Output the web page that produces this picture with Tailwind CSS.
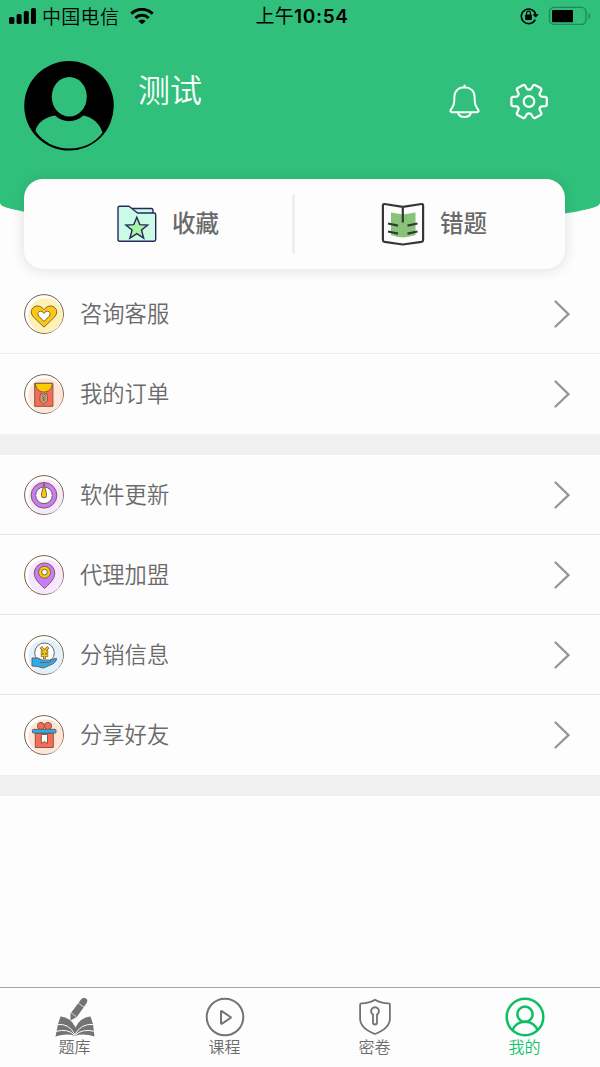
<!DOCTYPE html>
<html lang="zh-CN">
<head>
<meta charset="utf-8">
<title>我的</title>
<script src="https://cdn.jsdelivr.net/npm/@tailwindcss/browser@4"></script>
</head>
<body class="w-[600px] h-[1067px] flex flex-col overflow-hidden bg-[#fdfdfd] text-[#6a6a6a] font-['Noto_Sans_CJK_SC',sans-serif]">

<header class="h-[225px] shrink-0 bg-[#31c07b] rounded-b-[50%_22px]">
  <!-- Status bar -->
  <div class="h-8 flex items-center justify-between pl-[9px] pr-[9px] text-black">
    <div class="w-[240px] flex items-center">
      <svg class="w-[27px] h-4" viewBox="0 0 27 16"><rect x="0" y="9" width="5.4" height="7" rx="1.6"/><rect x="7.6" y="6" width="5" height="10" rx="1.6"/><rect x="14.8" y="3" width="5" height="13" rx="1.6"/><rect x="22" y="0" width="5" height="16" rx="1.6"/></svg>
      <span class="ml-[6px] w-[78px] text-[19px] leading-8 font-[350] whitespace-nowrap tracking-[0.3px]">中国电信</span>
      <svg class="ml-[10px] w-[24px] h-4" viewBox="0 0 24 16" fill="none" stroke="#000" stroke-width="3"><path d="M1.3 5.7C7.5-.1 16.5-.1 22.7 5.7"/><path d="M5.3 10C9.1 6.4 14.9 6.4 18.7 10"/><path d="M8.2 13Q12 9.9 15.8 13L12 16.2z" fill="#000" stroke="none"/></svg>
    </div>
    <span class="pl-[4px] text-[19px] leading-8 font-normal whitespace-nowrap tracking-[0.3px]">上午<span class="font-['Inter'] font-semibold text-[19px] tracking-[0.65px]">10:54</span></span>
    <div class="w-[240px] flex items-center justify-end">
      <svg class="w-[19px] h-[18px]" viewBox="0 0 19 18" fill="none" stroke="#000" stroke-width="1.6"><path d="M15.2 12.6A7.3 7.3 0 1 1 15.7 7.5"/><path d="M12.6 7.2h6L15.7 10.8z" fill="#000" stroke="none"/><rect x="5.2" y="7.5" width="6.6" height="5.5" rx=".8" fill="#000" stroke="none"/><path d="M6.6 8V6a1.9 1.9 0 0 1 3.8 0v2" stroke-width="1.2"/></svg>
      <svg class="ml-[9px] w-[43px] h-[20px]" viewBox="0 0 43 20"><rect x="1.500" y="1.400" width="36.500" height="17" rx="4.500" fill="none" stroke="#22885a" stroke-width="1.400"/><rect x="4" y="3.900" width="21" height="12.300" rx="1"/><path d="M40.500 6.500q3.500 3.500 0 7z" fill="#22885a"/></svg>
    </div>
  </div>
  <!-- Profile -->
  <div class="flex items-start pl-6 pt-[29px]">
    <svg class="w-[90px] h-[90px]" viewBox="0 0 90 90"><circle cx="45" cy="44.800" r="44.800"/><ellipse cx="45.3" cy="35.8" rx="17.5" ry="19.8" fill="#31c07b"/><path d="M11.500 70C13 62 21 56 31 54.500 39 62 51 62 59.500 54.500 69 56.500 76 63 78.500 71.500C71 82 59 87.500 45 87.500S19 81 11.500 70z" fill="#31c07b"/></svg>
    <h1 class="ml-6 mt-[4px] w-[311px] text-[32px] leading-[46px] font-[350] text-white">测试</h1>
    <svg class="mt-[23px] w-[31px] h-[35px]" viewBox="0 0 32 35" fill="none" stroke="#fff" stroke-width="2" stroke-linejoin="round" stroke-linecap="round"><path d="M16 1v2M2.500 28.500C.500 28 1.800 25.500 3 24.300 5 22 5.500 20 5.500 16.500V13C5.500 6.500 10 2.800 16 2.800S26.500 6.500 26.500 13v3.500C26.500 20 27 22 29 24.300c1.200 1.200 2.500 3.700.5 4.200z"/><path d="M9.500 29.500C11 34.800 21 34.800 22.500 29.500"/></svg>
    <svg class="ml-[30px] mt-[22px] w-[38px] h-[37px]" viewBox="0 0 38 37" fill="none" stroke="#fff" stroke-width="2.200" stroke-linejoin="round"><path d="M12.800 2.200Q14 1.400 15 2.500L17 6Q19 7.300 21 6L23.200 2.500Q24.200 1.400 25.500 2.200L30.500 5Q31.800 5.900 31.200 7.200L29.500 10.800Q29.600 13.200 31.800 13.600L35 13.900Q36.800 14.200 36.800 15.800V21.200Q36.800 22.800 35 23.100L31.800 23.400Q29.600 23.800 29.500 26.200L31.200 29.800Q31.800 31.100 30.500 32L25.500 34.800Q24.200 35.600 23.200 34.500L21 31Q19 29.700 17 31L15 34.500Q14 35.600 12.800 34.800L7.700 32Q6.400 31.100 7 29.800L8.700 26.200Q8.600 23.800 6.400 23.400L3.200 23.100Q1.400 22.800 1.400 21.200V15.800Q1.400 14.200 3.200 13.900L6.400 13.600Q8.600 13.200 8.700 10.800L7 7.200Q6.400 5.900 7.700 5z"/><circle cx="19" cy="18.500" r="5.300"/></svg>
  </div>
</header>

<!-- Shortcuts -->
<section class="relative z-10 -mt-[46.500px] ml-6 w-[541px] h-[90px] shrink-0 flex items-center rounded-[19px] bg-[#fdfdfd] shadow-[0_1px_14px_rgba(0,0,0,0.13)]">
  <a class="w-[268px] h-full flex items-center pl-[93px]">
    <svg class="w-[40px] h-[38px]" viewBox="0 0 40 38" stroke="#28285e" stroke-width="1.400" stroke-linejoin="round"><path d="M14 6V3.500H34q2 0 2 2V9H21z" fill="#cafbe7"/><path d="M1 3Q1 1.300 2.700 1.300H12L20.500 8H37q1.700 0 1.700 1.700V34.500q0 1.700-1.700 1.700H2.700Q1 36.200 1 34.500z" fill="#cafbe7"/><path d="M19.800 12.300l3 7.300 7.900.4-6.200 5 2.200 8.200-6.900-4.500-6.900 4.500 2.200-8.200-6.200-5 7.900-.4z" fill="#a8f5a4" stroke-linejoin="miter"/></svg>
    <span class="ml-[15px] pb-[3px] text-[23.500px] leading-9 font-medium">收藏</span>
  </a>
  <div class="w-[3px] h-[60px] bg-[#efefef]"></div>
  <a class="flex-1 h-full flex items-center pl-[86px]">
    <svg class="w-[44px] h-[44px]" viewBox="0 0 44 44" fill="none" stroke="#343638" stroke-width="2.200" stroke-linejoin="round"><path d="M10 10.500L21.800 12.500 34.500 10.500V33Q27 35 21.800 35.500 16 35 10 33z" fill="#87c477" stroke="none"/><path d="M3.500 2Q1.900 1.900 1.900 3.500V38Q1.900 39.600 3.500 39.900L21.800 42.500 40.500 39.900Q42.100 39.600 42.100 38V3.500Q42.100 1.900 40.500 2L21.800 4.900zM21.800 5V20.500"/><path d="M7 21.500L17 23.600M7 29.500L17 31.600M36.500 21.500L26.500 23.600M36.500 29.500L26.500 31.600"/></svg>
    <span class="ml-[15px] pb-[3px] text-[23.500px] leading-9 font-medium">错题</span>
  </a>
</section>

<main class="flex-1 pt-[5.500px] text-[22.300px] font-[350]">
  <section>
    <a class="h-20 flex items-center pl-6 pr-[30px] border-b border-[#eeeeee]">
      <svg class="w-[40px] h-[40px]" viewBox="0 0 40 40" stroke="#766047" stroke-width="1" stroke-linejoin="round"><circle cx="20" cy="20" r="19.400" fill="#fff"/><circle cx="21.500" cy="21.500" r="17.300" fill="#fff0b8" stroke="none"/><path d="M20 33.200L9.500 23C6.500 19.500 6.600 15.500 9.800 13.200 13.500 10.800 17.500 12.300 20 15.700 22.500 12.300 26.500 10.800 30.200 13.200 33.400 15.500 33.500 19.500 30.500 23z" fill="#fcc90b"/><path d="M20 27.500L15 22.300C13.500 20.500 13.600 18.500 15.100 17.600 17 16.600 19 17.500 20 19.400 21 17.500 23 16.600 24.900 17.600 26.400 18.500 26.500 20.500 25 22.300z" fill="#fff"/></svg>
      <span class="ml-4 pb-[2px] flex-1">咨询客服</span>
      <svg class="w-4 h-7" viewBox="0 0 16 28" fill="none" stroke="#969696" stroke-width="2.300" stroke-linecap="round"><path d="M1.500 1.500L14.500 14.200 1.500 26.500"/></svg>
    </a>
    <a class="h-20 flex items-center pl-6 pr-[30px]">
      <svg class="w-[40px] h-[40px]" viewBox="0 0 40 40" stroke="#766047" stroke-width="1" stroke-linejoin="round"><circle cx="20" cy="20" r="19.400" fill="#fff"/><circle cx="21.500" cy="21.500" r="17.300" fill="#ffe5d8" stroke="none"/><rect x="10.700" y="9.300" width="18.200" height="23" fill="#fc6a55"/><path d="M11.400 9.300H28.300C28.300 14.500 24.500 18 19.800 18S11.400 14.500 11.400 9.300z" fill="#fccb00"/><path d="M17 19l2.700 2 2.700-2 1 3v5l-3.700 3-3.700-3v-5z" fill="#d9aa89"/><path d="M17.500 21l2.200 3 2.200-3M17.500 24h4.400M17.500 26h4.400M19.700 24v4" fill="none" stroke-width=".8"/></svg>
      <span class="ml-4 pb-[2px] flex-1">我的订单</span>
      <svg class="w-4 h-7" viewBox="0 0 16 28" fill="none" stroke="#969696" stroke-width="2.300" stroke-linecap="round"><path d="M1.500 1.500L14.500 14.200 1.500 26.500"/></svg>
    </a>
  </section>
  <div class="h-[21px] bg-[#f0f0f0]"></div>
  <section>
    <a class="h-20 flex items-center pl-6 pr-[30px] border-b border-[#e6e6e6]">
      <svg class="w-[40px] h-[40px]" viewBox="0 0 40 40" stroke="#766047" stroke-width="1" stroke-linejoin="round"><circle cx="20" cy="20" r="19.400" fill="#fff"/><circle cx="21.500" cy="21.500" r="17.300" fill="#f7e7ff" stroke="none"/><circle cx="20" cy="20.300" r="12.800" fill="#c87cfa"/><circle cx="20" cy="20.300" r="8.300" fill="#fff"/><path d="M20 8.200C20.500 13 22.600 17 22.600 20.200a2.600 2.600 0 0 1-5.200 0C17.400 17 19.500 13 20 8.200z" fill="#fcc90b"/></svg>
      <span class="ml-4 pb-[2px] flex-1">软件更新</span>
      <svg class="w-4 h-7" viewBox="0 0 16 28" fill="none" stroke="#969696" stroke-width="2.300" stroke-linecap="round"><path d="M1.500 1.500L14.500 14.200 1.500 26.500"/></svg>
    </a>
    <a class="h-20 flex items-center pl-6 pr-[30px] border-b border-[#e6e6e6]">
      <svg class="w-[40px] h-[40px]" viewBox="0 0 40 40" stroke="#766047" stroke-width="1" stroke-linejoin="round"><circle cx="20" cy="20" r="19.400" fill="#fff"/><circle cx="21.500" cy="21.500" r="17.300" fill="#f7e7ff" stroke="none"/><path d="M20.500 33.500C17 30 10.200 24.500 10.200 18.200a10.300 10.300 0 0 1 20.600 0C30.800 24.500 24 30 20.500 33.500z" fill="#c87cfa"/><circle cx="20.500" cy="17.200" r="6" fill="#fcc90b"/><circle cx="20.500" cy="17.200" r="2.800" fill="#fff"/></svg>
      <span class="ml-4 pb-[2px] flex-1">代理加盟</span>
      <svg class="w-4 h-7" viewBox="0 0 16 28" fill="none" stroke="#969696" stroke-width="2.300" stroke-linecap="round"><path d="M1.500 1.500L14.500 14.200 1.500 26.500"/></svg>
    </a>
    <a class="h-20 flex items-center pl-6 pr-[30px] border-b border-[#e6e6e6]">
      <svg class="w-[40px] h-[40px]" viewBox="0 0 40 40" stroke="#766047" stroke-width="1" stroke-linejoin="round"><circle cx="20" cy="20" r="19.400" fill="#fff"/><circle cx="21.500" cy="21.500" r="17.300" fill="#e1f1ff" stroke="none"/><circle cx="20.500" cy="17.800" r="9.800" fill="#fff"/><path d="M16.800 12L20.500 16.500 24.200 12M16.800 17h7.400M16.800 20.300h7.400M20.500 16.500V24" fill="none" stroke="#766047" stroke-width="3"/><path d="M17 12.300L20.500 16.500 24 12.300M17.300 17h6.400M17.300 20.300h6.400M20.500 16.500V23.500" fill="none" stroke="#fcc90b" stroke-width="1.500"/><path d="M8 23H14L18 25H25.500L32.500 23.300Q33 25.500 29.500 28.500L23 31.500 19 33 13 31.300 8 31z" fill="#29abf5"/><path d="M16 27.500H22.500Q27.500 28 27 25" fill="none"/></svg>
      <span class="ml-4 pb-[2px] flex-1">分销信息</span>
      <svg class="w-4 h-7" viewBox="0 0 16 28" fill="none" stroke="#969696" stroke-width="2.300" stroke-linecap="round"><path d="M1.500 1.500L14.500 14.200 1.500 26.500"/></svg>
    </a>
    <a class="h-20 flex items-center pl-6 pr-[30px]">
      <svg class="w-[40px] h-[40px]" viewBox="0 0 40 40" stroke="#766047" stroke-width="1" stroke-linejoin="round"><circle cx="20" cy="20" r="19.400" fill="#fff"/><circle cx="21.500" cy="21.500" r="17.300" fill="#ffe5d8" stroke="none"/><circle cx="17" cy="11" r="3.600" fill="#fc6a55"/><circle cx="24" cy="11" r="3.600" fill="#fc6a55"/><rect x="11.300" y="18.500" width="18" height="14" fill="#fc6a55"/><rect x="8.500" y="14.300" width="23.500" height="3.800" rx="1" fill="#29abf5"/><path d="M17.300 19.500H23.500V28.500L20.400 26.500 17.300 28.500z" fill="#fff"/></svg>
      <span class="ml-4 pb-[2px] flex-1">分享好友</span>
      <svg class="w-4 h-7" viewBox="0 0 16 28" fill="none" stroke="#969696" stroke-width="2.300" stroke-linecap="round"><path d="M1.500 1.500L14.500 14.200 1.500 26.500"/></svg>
    </a>
  </section>
  <div class="h-[21px] bg-[#f0f0f0]"></div>
</main>

<nav class="h-20 shrink-0 grid grid-cols-4 border-t border-[#a6a6a6] text-[16px] leading-[18px] font-[350] text-[#6c6c6c]">
  <a class="flex flex-col items-center pt-[9px] pr-px">
    <svg class="w-[40px] h-[40px]" viewBox="0 0 40 40" fill="#737373"><path d="M26 2.500Q28.500-.300 31 1.500T31.300 6.500L21.800 20 15.500 23.500 15.500 16.500z"/><path d="M16 15.800l5.500 4M23 6l6 4.200" stroke="#fdfdfd" stroke-width=".7"/><path d="M5.500 19.500Q16 20.500 20.500 30.500 25 20.500 35.500 19.500L38 27 39.500 39.500Q28 36 20 39 12 36 .5 39.500L3 27z"/><path d="M2.500 27.500Q14 26.300 20 37.500 26 26.300 38.500 27.500M.5 34.500Q13 31 20 38.500 27 31 40 34.500" fill="none" stroke="#fdfdfd" stroke-width="1"/></svg>
    <span>题库</span>
  </a>
  <a class="flex flex-col items-center pt-[9px] pr-px">
    <svg class="w-[40px] h-[40px]" viewBox="0 0 40 40" fill="none" stroke="#737373" stroke-width="2" stroke-linejoin="round"><circle cx="20" cy="20" r="18.300"/><path d="M16 14.500Q16 13.800 16.700 14.200L25.500 20Q26 20.500 25.500 21L16.700 26.800Q16 27 16 26.300z"/></svg>
    <span>课程</span>
  </a>
  <a class="flex flex-col items-center pt-[9px] pr-px">
    <svg class="w-[40px] h-[40px]" viewBox="0 0 40 40" fill="none" stroke="#737373" stroke-width="1.800" stroke-linejoin="round"><path d="M20 2.700Q26 6.300 33.500 6.300 34.900 6.300 34.900 7.700V21.500C34.900 29 29 33.500 20 37 11 33.500 5.100 29 5.100 21.500V7.700Q5.100 6.300 6.500 6.300 14 6.300 20 2.700z"/><path d="M18 17.500A3.900 3.900 0 1 1 22 17.500V25.500a2 2 0 0 1-4 0z"/></svg>
    <span>密卷</span>
  </a>
  <a class="flex flex-col items-center pt-[9px] pr-px text-[#10c469]">
    <svg class="w-[40px] h-[40px]" viewBox="0 0 40 40" fill="none" stroke="#0dbf64" stroke-width="2.500"><circle cx="20" cy="20" r="18.300"/><circle cx="20" cy="17.200" r="7.600"/><path d="M7.300 33.500C9.500 28 14 24.700 20 24.700S30.500 28 32.700 33.500"/></svg>
    <span>我的</span>
  </a>
</nav>
</body>
</html>
